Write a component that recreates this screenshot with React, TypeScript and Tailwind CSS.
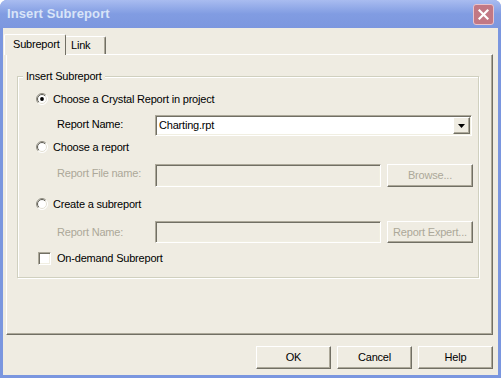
import React from "react";

const font = { fontFamily: '"Liberation Sans", Arial, sans-serif' };

const sunken =
  "border border-t-[#ACA899] border-l-[#ACA899] border-r-white border-b-white shadow-[inset_1px_1px_0_#716F64,inset_-1px_-1px_0_#F1EFE2]";
const raised =
  "border border-t-white border-l-white border-r-[#716F64] border-b-[#716F64] shadow-[inset_-1px_-1px_0_#ACA899]";

function Radio({ checked }: { checked?: boolean }) {
  return (
    <svg width="12" height="12" viewBox="0 0 12 12" className="shrink-0">
      <defs>
        <linearGradient id="rOuter" x1="0" y1="0" x2="1" y2="1">
          <stop offset="0.45" stopColor="#8E8C80" />
          <stop offset="0.55" stopColor="#FFFFFF" />
        </linearGradient>
        <linearGradient id="rInner" x1="0" y1="0" x2="1" y2="1">
          <stop offset="0.45" stopColor="#5A584E" />
          <stop offset="0.55" stopColor="#E2DFD2" />
        </linearGradient>
      </defs>
      <circle cx="6" cy="6" r="5.5" fill="#fff" stroke="url(#rOuter)" strokeWidth="1" />
      <circle cx="6" cy="6" r="4.5" fill="none" stroke="url(#rInner)" strokeWidth="1" />
      {checked && <circle cx="6" cy="6" r="1.9" fill="#000" />}
    </svg>
  );
}

function Btn({ label, disabled, w = 75, h = 23 }: { label: string; disabled?: boolean; w?: number; h?: number }) {
  return (
    <div
      className={`${raised} flex items-center justify-center text-[11px] ${disabled ? "text-[#ACA899]" : "text-black"}`}
      style={{ width: w, height: h }}
    >
      {label}
    </div>
  );
}

export default function App() {
  return (
    <div
      className="w-[501px] h-[378px] flex flex-col overflow-hidden rounded-t-[7px] bg-[#7A96DF]"
      style={font}
    >
      {/* Title bar */}
      <div className="h-[28px] flex items-center pl-[7px] pr-[7px] bg-gradient-to-b from-[#A9BCF0] via-[#819CE2] to-[#7C97DF]">
        <span className="text-[13px] font-bold text-[#D8E4F8] tracking-[0.1px]">Insert Subreport</span>
        <div className="ml-auto w-[21px] h-[21px] rounded-[3px] bg-[#C27884] border border-[#E9C3CB] flex items-center justify-center">
          <svg width="11" height="11" viewBox="0 0 11 11">
            <path d="M1.5 1.5 L9.5 9.5 M9.5 1.5 L1.5 9.5" stroke="#fff" strokeWidth="2.2" strokeLinecap="square" />
          </svg>
        </div>
      </div>

      {/* Body */}
      <div className="flex-1 mx-[3px] mb-[3px] bg-[#EFECE2] flex flex-col text-[11px] tracking-[-0.2px] text-black">
        <div className="ml-[3px] mt-[5px] w-[487px] flex flex-col">
          {/* Tabs */}
          <div className="h-[21px] flex items-end relative z-10">
            <div className="-ml-[2px] w-[62px] h-[21px] -mb-[1px] bg-[#EFECE2] border-t border-l border-white border-r border-r-[#716F64] rounded-t-[2px] flex items-center pl-[8px] pb-[1px]">
              Subreport
            </div>
            <div className="w-[40px] h-[18px] border-t border-white border-r border-r-[#716F64] shadow-[inset_-1px_0_0_#ACA899] rounded-tr-[2px] flex items-center pl-[5px]">
              Link
            </div>
          </div>
          {/* Panel */}
          <div className="h-[281px] border-t border-l border-white border-r border-r-[#716F64] border-b border-b-[#716F64] shadow-[inset_-1px_-1px_0_#ACA899]">
            {/* Group box */}
            <div className="relative ml-[10px] mt-[21px] w-[462px] h-[202px] border border-[#D0D0BF] shadow-[inset_1px_1px_0_#fff,1px_1px_0_#fff]">
              <span className="absolute -top-[8px] left-[5px] px-[3px] bg-[#EFECE2] leading-[14px]">
                Insert Subreport
              </span>
              <div className="flex flex-col pt-[14px]">
                {/* Radio 1 */}
                <div className="h-[16px] flex items-center pl-[18px] gap-[5px]">
                  <Radio checked />
                  <span>Choose a Crystal Report in project</span>
                </div>
                {/* Report name combo */}
                <div className="mt-[8px] h-[21px] flex items-center pl-[39px]">
                  <span className="w-[98px] -mt-[3px]">Report Name:</span>
                  <div className={`${sunken} bg-white w-[317px] h-[21px] flex items-center`}>
                    <span className="pl-[3px] flex-1">Charting.rpt</span>
                    <div className={`${raised} w-[17px] h-[17px] mr-[1px] bg-[#EFECE2] flex items-center justify-center`}>
                      <svg width="7" height="4" viewBox="0 0 7 4">
                        <path d="M0 0 H7 L3.5 4 Z" fill="#000" />
                      </svg>
                    </div>
                  </div>
                </div>
                {/* Radio 2 */}
                <div className="mt-[3px] h-[16px] flex items-center pl-[18px] gap-[5px]">
                  <Radio />
                  <span>Choose a report</span>
                </div>
                <div className="mt-[9px] h-[23px] flex items-center pl-[39px]">
                  <span className="w-[98px] -mt-[5px] text-[#ACA899]">Report File name:</span>
                  <div className={`${sunken} w-[226px] h-[23px]`} />
                  <div className="ml-[6px]">
                    <Btn label="Browse..." disabled w={86} h={23} />
                  </div>
                </div>
                {/* Radio 3 */}
                <div className="mt-[9px] h-[16px] flex items-center pl-[18px] gap-[5px]">
                  <Radio />
                  <span>Create a subreport</span>
                </div>
                <div className="mt-[9px] h-[22px] flex items-center pl-[39px]">
                  <span className="w-[98px] text-[#ACA899]">Report Name:</span>
                  <div className={`${sunken} w-[226px] h-[22px]`} />
                  <div className="ml-[6px]">
                    <Btn label="Report Expert..." disabled w={86} h={22} />
                  </div>
                </div>
                {/* Checkbox */}
                <div className="mt-[7px] h-[16px] flex items-center pl-[20px] gap-[6px]">
                  <div className={`${sunken} w-[13px] h-[13px] bg-white`} />
                  <span>On-demand Subreport</span>
                </div>
              </div>
            </div>
          </div>
        </div>
        {/* Bottom buttons */}
        <div className="mt-[11px] flex justify-end gap-[6px] pr-[5px]">
          <Btn label="OK" />
          <Btn label="Cancel" />
          <Btn label="Help" />
        </div>
      </div>
    </div>
  );
}
